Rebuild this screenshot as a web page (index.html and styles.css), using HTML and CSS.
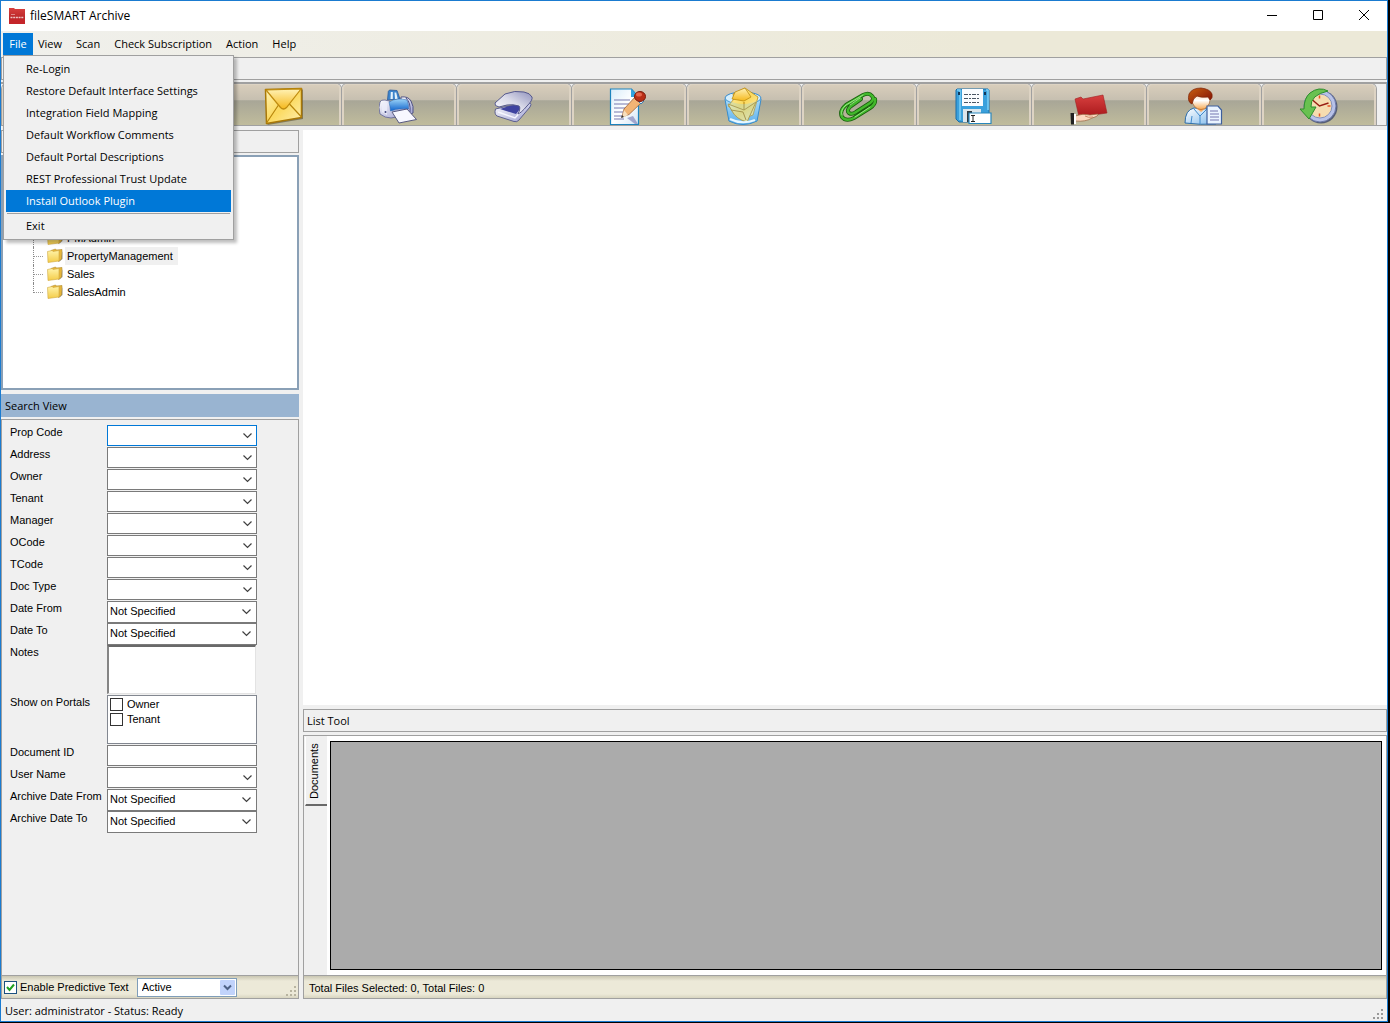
FILE: index.html
```html
<!DOCTYPE html>
<html lang="en">
<head>
<meta charset="utf-8">
<title>fileSMART Archive</title>
<link rel="stylesheet" href="styles.css">
</head>
<body>
<svg class="defs" aria-hidden="true">
  <defs>
    <linearGradient id="gold" x1="0" y1="0" x2="1" y2="1"><stop offset="0" stop-color="#fff3b8"/><stop offset=".5" stop-color="#fbd95e"/><stop offset="1" stop-color="#fff0b0"/></linearGradient>
    <linearGradient id="flap" x1="0" y1="0" x2="0" y2="1"><stop offset="0" stop-color="#fff2b5"/><stop offset="1" stop-color="#f5b81c"/></linearGradient>
    <linearGradient id="leaf" x1="0" y1="0" x2="0" y2="1"><stop offset="0" stop-color="#fff3a8"/><stop offset="1" stop-color="#f4cc48"/></linearGradient>
    <linearGradient id="lilac" x1="0" y1="0" x2="1" y2="1"><stop offset="0" stop-color="#ffffff"/><stop offset="1" stop-color="#9a9cd0"/></linearGradient>
    <linearGradient id="lid" x1="0" y1="1" x2="1" y2="0"><stop offset="0" stop-color="#ffffff"/><stop offset=".5" stop-color="#dcdcea"/><stop offset="1" stop-color="#8f91bc"/></linearGradient>
    <linearGradient id="blue" x1="0" y1="0" x2="0" y2="1"><stop offset="0" stop-color="#9cd4f8"/><stop offset="1" stop-color="#1064cc"/></linearGradient>
    <linearGradient id="page" x1="0" y1="0" x2="1" y2="1"><stop offset="0" stop-color="#d8ecfa"/><stop offset=".5" stop-color="#ffffff"/><stop offset="1" stop-color="#d4e6f6"/></linearGradient>
    <linearGradient id="shirt" x1="0" y1="0" x2="1" y2="1"><stop offset="0" stop-color="#ffffff"/><stop offset="1" stop-color="#7db8ea"/></linearGradient>
    <linearGradient id="glass" x1="0" y1="0" x2="0" y2="1"><stop offset="0" stop-color="#b9e0fb"/><stop offset="1" stop-color="#4fa5e6"/></linearGradient>
    <linearGradient id="red" x1="0" y1="0" x2="0" y2="1"><stop offset="0" stop-color="#d8403f"/><stop offset="1" stop-color="#a8181b"/></linearGradient>
    <linearGradient id="skin" x1="0" y1="0" x2="0" y2="1"><stop offset="0" stop-color="#f6b070"/><stop offset=".55" stop-color="#ffffff"/><stop offset="1" stop-color="#f8a850"/></linearGradient>
    <linearGradient id="hair" x1="0" y1="0" x2="1" y2="1"><stop offset="0" stop-color="#c86010"/><stop offset="1" stop-color="#7c0a04"/></linearGradient>
    <symbol id="folder" viewBox="0 0 16 16">
      <path d="M2 15.500 12 14l3.500-3V3l-3.500 11Z" fill="#77715f" opacity=".7"/>
      <path d="M4 2.500 8.500 1l1 1L15 1.500 14.500 11l-3 2.500Z" fill="#e5b53a" stroke="#b08a2a" stroke-width=".6"/>
      <path d="M.5 3.500 5 2.500l1 1 6-1V13L1 14.500Z" fill="url(#leaf)" stroke="#d0a840" stroke-width=".6"/>
    </symbol>
  </defs>
</svg>
<div class="window">
  <header class="titlebar">
    <svg class="app-icon" viewBox="0 0 16 16" aria-hidden="true"><path d="M0 0h5l1 1h10v15H0Z" fill="url(#red)"/><path d="M0 11h16v5H0Z" fill="#c4252a"/><path d="M1.500 9.500h13" stroke="#f0c4c4" stroke-width="1.500" stroke-dasharray="2 .7"/><path d="M2 6.500h4" stroke="#e08a8a"/></svg>
    <h1 class="title">fileSMART Archive</h1>
    <button class="winbtn" aria-label="Minimize"><svg viewBox="0 0 12 12"><path d="M1 5.500h10" /></svg></button>
    <button class="winbtn" aria-label="Maximize"><svg viewBox="0 0 12 12"><path d="M1.500.5h9v9h-9Z"/></svg></button>
    <button class="winbtn" aria-label="Close"><svg viewBox="0 0 12 12"><path d="m1 0 10 10M11 0 1 10"/></svg></button>
  </header>
  <nav class="menubar">
    <div class="menu-holder">
      <button class="menu-item open">File</button>
      <div class="dropdown">
        <button class="command">Re-Login</button>
        <button class="command">Restore Default Interface Settings</button>
        <button class="command">Integration Field Mapping</button>
        <button class="command">Default Workflow Comments</button>
        <button class="command">Default Portal Descriptions</button>
        <button class="command">REST Professional Trust Update</button>
        <button class="command selected">Install Outlook Plugin</button>
        <hr class="divider">
        <button class="command">Exit</button>
      </div>
    </div>
    <button class="menu-item">View</button>
    <button class="menu-item">Scan</button>
    <button class="menu-item">Check Subscription</button>
    <button class="menu-item">Action</button>
    <button class="menu-item">Help</button>
  </nav>
  <div class="caption-strip"></div>
  <div class="toolbar">
    <button class="tool" aria-label="Open"></button>
    <button class="tool" aria-label="New"></button>
    <button class="tool" aria-label="Email"><svg viewBox="0 0 40 40"><path d="M3 5.500 39 4.500V34L3.500 40Z" fill="#5c5030" opacity=".6"/><path d="M1.500 4.500 37.500 3.500V32.500L2.500 38.500Z" fill="url(#gold)" stroke="#a87808" stroke-width="1.500" stroke-linejoin="round"/><path d="M2.500 38 14.500 20M37.500 32 25 18.500" fill="none" stroke="#b8860b" stroke-width="1.200"/><path d="M2 5 37 4 22.500 22.500Q19.500 25.500 16.500 22.500Z" fill="url(#flap)" stroke="#c08c10" stroke-width="1.200"/></svg></button>
    <button class="tool" aria-label="Print"><svg viewBox="0 0 40 40"><path d="m8.500 15 .8-8.500 1.200-1.500 7.500.5L21 14Z" fill="#3c84cc" stroke="#2c5c9c" stroke-width=".8"/><path d="m11.500 14 .3-7h2v7M16 14l-.5-6.500h1.700l1.500 6.500" fill="#e4f2fc"/><path d="M22 12q7-1 10 4 3 5 2 12l-6 2-6-8Z" fill="url(#lilac)" stroke="#4f5282"/><path d="M27 13q5 5 4 14" fill="none" stroke="#4c4f86"/><path d="M1 17q1-2.500 5-2l4 1 18 6v8l-16 3q-6 0-11-4-2-7 0-12Z" fill="url(#lilac)" stroke="#5c5f90" stroke-width=".8"/><path d="M10 17q8-5 18-2 2 4 1.500 9-10-1-18 2Q11 21 10 17Z" fill="url(#blue)" stroke="#2c62a8" stroke-width=".5"/><path d="m13 27 15-3 9.500 10.500L20 38Z" fill="#f7f7ff" stroke="#585a80"/><path d="M3 18q3-1 5 0v12l-5-3Z" fill="#eceefa" opacity=".8"/><circle cx="6.500" cy="27" r="1" fill="#3e447c"/></svg></button>
    <button class="tool" aria-label="Scan"><svg viewBox="0 0 40 40"><path d="M1.500 24 10 22 36 18q2 1 0 4L25 35q-2 2.500-5 1.500L3 31q-3-2-1.500-7Z" fill="url(#lilac)" stroke="#5d6090"/><path d="m6 24 9-3 15-2-8 10Z" fill="#3f43a0"/><path d="m4 27 17 6 12-13" fill="none" stroke="#f6f6ff" stroke-width="1.500"/><path d="M1 18 11 9q10-4 19-2 6 1 8 5 1 3-5 9-6 7-9 8 3-6 1-8-6-2-12-1l-8 2Q0 21 1 18Z" fill="url(#lid)" stroke="#55588c"/></svg></button>
    <button class="tool" aria-label="Edit notes"><svg viewBox="0 0 40 40"><path d="M1.500 4h21l7 8v27.500h-28Z" fill="url(#page)" stroke="#1c83bd" stroke-width="1.200"/><path d="M22 4v8h8Z" fill="#32a4e0"/><path d="M5 15h16M5 19h15M5 23h12M5 27h9M5 31h8M5 34h10" stroke="#7779af"/><path d="m18 33 6-2 5 8H26Z" fill="#8586bb" opacity=".7"/><path d="m13 32 2-8L27 11l6 6-13 12.500Z" fill="#f2b475" stroke="#9b6138" stroke-width=".8"/><path d="m15 25 4 5-6 3Z" fill="#f7dfbd"/><path d="m13 30 2 2-3 1Z" fill="#333"/><path d="m25 12 3-3 7 7-3 3Z" fill="#d5e9f8" stroke="#4080ac"/><ellipse cx="31" cy="11.500" rx="5.500" ry="5" fill="#b92f16" stroke="#7b1a0b"/><ellipse cx="30" cy="9.500" rx="3" ry="2" fill="#e4664d"/></svg></button>
    <button class="tool" aria-label="Mail basket"><svg viewBox="0 0 40 40"><path d="m1 14 4 22q14 7 28 0l4-22Z" fill="url(#glass)" stroke="#2c83c8"/><ellipse cx="19" cy="13" rx="18" ry="6" fill="#d5effd" stroke="#378aca"/><path d="m9 9 12-6 13 9-5 18-8 3L4 21l6-7Z" fill="url(#gold)" stroke="#b78b18" stroke-width=".8"/><path d="m8 14 3-7 10-4 6 9-7 4Z" fill="url(#flap)" stroke="#bd8c10" stroke-width=".8"/><path d="m4 19 16 6 12-8-9 20Q12 34 8 26Z" fill="url(#gold)" stroke="#bc8b19"/><path d="m7 25 12 2 3 8M20 17v8" fill="none" stroke="#b4810f"/><path d="M1 14q18 10 36 0l-4 22q-14 7-28 0Z" fill="#86cff8" opacity=".28"/><path d="M6 34q12 6 25 1" fill="none" stroke="#e7f7ff" stroke-width="2"/></svg></button>
    <button class="tool" aria-label="Attach"><svg viewBox="0 0 40 40" fill="none" stroke-linecap="round"><path d="m22 14-10 7q-5 4-2 7 3 2 7-1l14-9q5-4 2-7-3-4-9-1L7 20q-7 6-4 12 4 5 12 1l16-10q6-4 5-9" stroke="#175e0c" stroke-width="4"/><path d="m22 14-10 7q-5 4-2 7 3 2 7-1l14-9q5-4 2-7-3-4-9-1L7 20q-7 6-4 12 4 5 12 1l16-10q6-4 5-9" stroke="#41b82b" stroke-width="2.500"/><path d="m21 13-10 7M24 10 7 20q-6 5-4 10M31 22 16 32" stroke="#b3ee9e" stroke-width=".8"/></svg></button>
    <button class="tool" aria-label="Save as"><svg viewBox="0 0 40 40"><path d="M3 4h31l1 1v32H5l-3-3V5Z" fill="#3aa0dc" stroke="#176da8"/><path d="M3 5h3v30M32 5h2v20" fill="none" stroke="#7ed0f6" stroke-width="1.500"/><path d="M8 4h21v17H8Z" fill="#fafcff"/><path d="M10 9.500h16M10 13.500h16M10 17.500h16" stroke="#4a5665" stroke-width="1.200" stroke-dasharray="4 1 2 1"/><path d="M9 24h18v13H9Z" fill="#dce6ec"/><path d="M13 26h5v11h-5Z" fill="#303940"/><path d="M4 7h2v3H4zM30 7h2v3h-2Z" fill="#12395c"/><path d="M15 28h22v10.500H15Z" fill="#fff" stroke="#2887bd" stroke-width="1.200"/><path d="M17 30.500h4m-4 6h4m-2-6v6" stroke="#222"/></svg></button>
    <button class="tool" aria-label="Share folder"><svg viewBox="0 0 40 40"><path d="m6 14 6-2 2 2 20-4 4 18-28 4Z" fill="url(#red)" stroke="#a02022" stroke-width=".6"/><path d="M6 31q8-3 15-1l8-1q1 2-6 4-6 4-17 3Z" fill="#fbd8bf" stroke="#96613d" stroke-width=".7"/><path d="M16 31q3 2 8 1" fill="none" stroke="#c98a66"/><path d="M4 29h3v10H4Z" fill="#fff"/><path d="M1.500 28H5v11.500H2Z" fill="#222"/></svg></button>
    <button class="tool" aria-label="User record"><svg viewBox="0 0 40 40"><path d="M1 38q0-13 9-15l15 1q7 5 7 15-16 1-31-1Z" fill="url(#shirt)" stroke="#2c6ca8"/><path d="m10 24 6 7 8-8M16 30v9M7 38l1-7" stroke="#3f8acc" fill="none"/><path d="m11 22 6 5 6-5-1-3H12Z" fill="#f6ad62"/><ellipse cx="17" cy="14.500" rx="9" ry="10" fill="url(#skin)" stroke="#a65721" stroke-width=".6"/><path d="M8 19Q3 17 5 9q3-6 12-6 9 1 11 6 1 4-2 6l-2-3q-7 1-11-1-4 2-5 8Z" fill="url(#hair)" stroke="#7b2005" stroke-width=".7"/><path d="M23 21h11l3.500 4v14H23Z" fill="#eaf4ff" stroke="#3d5f9d" stroke-width="1.200"/><path d="M26 26h8M26 29h9M26 32h9M26 35h9" stroke="#7477b0"/></svg></button>
    <button class="tool" aria-label="History"><svg viewBox="0 0 40 40"><circle cx="22" cy="22" r="16.500" fill="#555e76"/><circle cx="21" cy="21" r="16" fill="#b8c2e8" stroke="#6c78a8"/><circle cx="21" cy="21" r="12" fill="#f6dcb0" stroke="#8391bd"/><path d="M20.500 10.500v3M20.500 28.500v3M28.500 21h3" stroke="#e65425" stroke-width="1.500"/><path d="m13.500 15 7 6 9-3" fill="none" stroke="#981c12" stroke-width="1.500"/><path d="M29 6Q20 1 11 8q-6 5-6 16H1l9 10 7-12h-5q-1-12 17-16Z" fill="#69c150" stroke="#2c8e2a"/></svg></button>
  </div>
  <main class="workspace">
    <aside class="side">
      <div class="pane-head"></div>
      <ul class="tree">
        <li class="node"><svg class="folder" aria-hidden="true"><use href="#folder"/></svg><span class="node-name">PMAdmin</span></li>
        <li class="node"><svg class="folder" aria-hidden="true"><use href="#folder"/></svg><span class="node-name current">PropertyManagement</span></li>
        <li class="node"><svg class="folder" aria-hidden="true"><use href="#folder"/></svg><span class="node-name">Sales</span></li>
        <li class="node"><svg class="folder" aria-hidden="true"><use href="#folder"/></svg><span class="node-name">SalesAdmin</span></li>
      </ul>
      <h2 class="search-head">Search View</h2>
      <form class="search">
        <div class="field"><label for="prop">Prop Code</label><select id="prop" class="combo focused"><option></option></select></div>
        <div class="field"><label for="address">Address</label><select id="address" class="combo"><option></option></select></div>
        <div class="field"><label for="owner">Owner</label><select id="owner" class="combo"><option></option></select></div>
        <div class="field"><label for="tenant">Tenant</label><select id="tenant" class="combo"><option></option></select></div>
        <div class="field"><label for="manager">Manager</label><select id="manager" class="combo"><option></option></select></div>
        <div class="field"><label for="ocode">OCode</label><select id="ocode" class="combo"><option></option></select></div>
        <div class="field"><label for="tcode">TCode</label><select id="tcode" class="combo"><option></option></select></div>
        <div class="field"><label for="doctype">Doc Type</label><select id="doctype" class="combo"><option></option></select></div>
        <div class="field"><label for="from">Date From</label><select id="from" class="combo date"><option>Not Specified</option></select></div>
        <div class="field"><label for="to">Date To</label><select id="to" class="combo date"><option>Not Specified</option></select></div>
        <div class="field tall"><label for="notes">Notes</label><textarea id="notes" class="notes"></textarea></div>
        <div class="field tall"><span>Show on Portals</span>
          <div class="checklist">
            <label class="check"><input type="checkbox" class="box"><span class="check-text">Owner</span></label>
            <label class="check"><input type="checkbox" class="box"><span class="check-text">Tenant</span></label>
          </div>
        </div>
        <div class="field"><label for="docid">Document ID</label><input id="docid" type="text" class="textbox"></div>
        <div class="field"><label for="user">User Name</label><select id="user" class="combo"><option></option></select></div>
        <div class="field"><label for="afrom">Archive Date From</label><select id="afrom" class="combo date"><option>Not Specified</option></select></div>
        <div class="field"><label for="ato">Archive Date To</label><select id="ato" class="combo date"><option>Not Specified</option></select></div>
      </form>
      <div class="tan-bar">
        <label class="check predictive"><input type="checkbox" class="box ticked" checked>Enable Predictive Text</label>
        <select class="state" aria-label="State"><option>Active</option></select>
        <svg class="grip light" viewBox="0 0 12 12" aria-hidden="true"><path d="M8 0h2v2H8zM4 4h2v2H4zM8 4h2v2H8zM0 8h2v2H0zM4 8h2v2H4zM8 8h2v2H8z"/></svg>
      </div>
    </aside>
    <section class="content">
      <div class="viewer"></div>
      <h2 class="pane-head">List Tool</h2>
      <div class="documents">
        <div class="tabs"><button class="tab"><span class="tab-text">Documents</span></button></div>
        <div class="sheet"><div class="grid-area"></div></div>
      </div>
      <div class="tan-bar totals">Total Files Selected: 0, Total Files: 0</div>
    </section>
  </main>
  <footer class="statusbar">
    <span>User: administrator - Status: Ready</span>
    <svg class="grip" viewBox="0 0 12 12" aria-hidden="true"><path d="M8 0h2v2H8zM4 4h2v2H4zM8 4h2v2H8zM0 8h2v2H0zM4 8h2v2H4zM8 8h2v2H8z"/></svg>
  </footer>
</div>
</body>
</html>
```
FILE: styles.css
```css
:root {
  --ui: "Open Sans", "Noto Sans", sans-serif;
  --form: "Liberation Sans", Arial, sans-serif;
  --line: #a0a0a0;
  --face: #f0f0f0;
  --accent: #0078d7;
}
* { box-sizing: border-box; }
body {
  margin: 0;
  padding: 0 2px 1px 0;
  min-height: 100vh;
  display: flex;
  background: #000;
  color: #000;
  font: 11px/14px var(--form);
}
button, select, input, textarea { font: inherit; color: inherit; margin: 0; border-radius: 0; }
button { border: 0; padding: 0; background: none; }
h1, h2 { margin: 0; font-weight: 400; }
.defs { position: absolute; width: 0; height: 0; }

.window {
  flex: 1;
  min-width: 0;
  display: flex;
  flex-direction: column;
  background: var(--face);
  border: 1px solid #1a7bd0;
}

.titlebar { display: flex; align-items: center; height: 30px; padding-left: 8px; background: #fff; }
.app-icon { width: 16px; height: 16px; margin-right: 5px; }
.title { flex: 1; font: 12px/16px var(--ui); }
.winbtn { width: 46px; height: 30px; display: grid; place-items: center; }
.winbtn svg { width: 12px; height: 12px; fill: none; stroke: #000; }

.menubar {
  display: flex;
  align-items: center;
  height: 26px;
  padding-left: 2px;
  background: linear-gradient(to right, #f0f0ec, #ece9d8 70%);
  font: 11px/22px var(--ui);
}
.menu-holder { position: relative; }
.menu-item { height: 22px; padding: 0 9px 0 5px; }
.menu-item.open { width: 30px; padding: 0; background: var(--accent); color: #fff; }
.dropdown {
  position: absolute;
  z-index: 2;
  top: 22px;
  left: 0;
  width: 231px;
  padding: 2px;
  background: var(--face);
  border: 1px solid var(--line);
  box-shadow: 3px 3px 3px rgba(0, 0, 0, .25);
}
.command { display: block; width: 100%; height: 22px; padding-left: 20px; text-align: left; }
.command.selected { background: var(--accent); color: #fff; }
.divider { height: 1px; margin: 1px; border: 0; background: var(--line); }

.caption-strip { height: 23px; border: 1px solid var(--line); margin-bottom: 2px; }

.toolbar {
  display: grid;
  grid-template-columns: 110fr repeat(11, 115fr);
  height: 44px;
  padding: 0 9px 0 1px;
  border: solid var(--line);
  border-width: 2px 1px 1px 0;
}
.tool {
  display: grid;
  place-items: center;
  margin-right: 1px;
  border: 2px solid #ddd3c3;
  border-width: 1px 2px 0;
  border-radius: 5px 5px 0 0;
  background: linear-gradient(#d8cdbb, #c6bfb0 38%, #a8a697 39%, #c0bc9c);
  box-shadow: 0 0 0 1px var(--line);
}
.tool svg { width: 40px; height: 40px; }

.workspace { flex: 1; display: grid; grid-template-columns: 298px 1fr; gap: 4px; padding-top: 4px; }
.side, .content { display: flex; flex-direction: column; min-width: 0; }
.pane-head { height: 23px; padding-left: 3px; border: 1px solid var(--line); font: 11px/21px var(--ui); }
.tree {
  height: 235px;
  margin: 2px 0 4px;
  padding: 72px 0 0 30px;
  list-style: none;
  background: #fff;
  border: 2px solid #8aa0b6;
}
.node { display: flex; align-items: center; height: 18px; }
.node::before {
  content: "";
  width: 9px;
  height: 18px;
  margin-right: 4px;
  border-left: 1px dotted #888;
  background: linear-gradient(to right, #999 50%, transparent 50%) 0 9px / 2px 1px repeat-x;
}
.node:last-child::before { height: 10px; margin-bottom: 8px; }
.folder { width: 16px; height: 16px; margin-right: 2px; }
.node-name { padding: 0 5px 0 2px; line-height: 18px; }
.node-name.current { background: var(--face); }

.search-head { height: 23px; padding-left: 4px; background: #99b4d1; font: 11px/23px var(--ui); }
.search { flex: 1; margin-top: 2px; padding: 5px 8px; border: solid var(--line); border-width: 1px 1px 0; }
.field { display: grid; grid-template-columns: 97px 150px; height: 22px; }
.field.tall { height: 50px; }
.combo, .textbox { width: 150px; height: 21px; padding: 0 2px; background: #fff; border: 1px solid #7a7a7a; outline: 0; }
.combo {
  appearance: none;
  background: #fff url("data:image/svg+xml,%3Csvg xmlns='http://www.w3.org/2000/svg' width='9' height='6'%3E%3Cpath d='m.5.500 4 4 4-4' fill='none' stroke='%23404040' stroke-width='1.200'/%3E%3C/svg%3E") no-repeat right 4px center;
}
.combo.focused { border-color: var(--accent); }
.combo.date { height: 22px; padding-bottom: 2px; background-position: right 5px center; }
.notes { width: 149px; height: 49px; resize: none; border: 1px solid #e3e3e3; border-top: 2px solid #696969; border-left: 2px solid #858585; }
.checklist { height: 49px; padding: 1px 2px; background: #fff; border: 1px solid #828790; }
.check { display: flex; align-items: center; gap: 4px; height: 15px; }
.check-text { padding-bottom: 2px; }
.box { appearance: none; width: 13px; height: 13px; background: #fff; border: 1px solid #333; }
.box.ticked {
  border-color: #1c5180;
  background: #fff url("data:image/svg+xml,%3Csvg xmlns='http://www.w3.org/2000/svg' width='9' height='9'%3E%3Cpath d='m1 4 2.500 3L8 1.500' fill='none' stroke='%2321a121' stroke-width='2'/%3E%3C/svg%3E") no-repeat center;
}

.tan-bar {
  display: flex;
  align-items: center;
  height: 24px;
  padding: 0 0 0 2px;
  border: 1px solid var(--line);
  background: linear-gradient(#c9c6b2, #ece9d8 5px, #ece9d8 18px, #d8d5c0);
}
.predictive { gap: 3px; margin-right: 8px; white-space: nowrap; }
.state {
  appearance: none;
  width: 100px;
  height: 19px;
  padding: 0 4px;
  border: 1px solid #7f9db9;
  background:
    url("data:image/svg+xml,%3Csvg xmlns='http://www.w3.org/2000/svg' width='15' height='15'%3E%3Crect width='15' height='15' rx='1' fill='%23c1d3fb'/%3E%3Cpath d='m4 5.500 3.500 3.500L11 5.500' fill='none' stroke='%234d6185' stroke-width='2'/%3E%3C/svg%3E") no-repeat right 1px center,
    #fff;
}
.grip { width: 12px; height: 12px; margin-left: auto; fill: #999; }
.grip.light { align-self: flex-end; fill: #b8b4a0; }

.viewer { flex: 1; margin-bottom: 4px; background: #fff; }
.documents { display: flex; height: 240px; margin-top: 3px; border: solid var(--line); border-width: 1px 1px 0; }
.tabs { width: 23px; padding: 1px 0 0 1px; }
.tab { width: 22px; height: 69px; display: flex; justify-content: flex-start; padding: 2px 0 0 1px; border-bottom: 2px solid #696969; border-left: 1px solid #fff; }
.tab-text { writing-mode: vertical-rl; transform: rotate(180deg); }
.sheet { flex: 1; display: flex; padding: 5px 4px 5px 3px; background: #fff; }
.grid-area { flex: 1; background: #ababab; border: 1px solid #000; }
.totals { padding: 1px 0 0 5px; }

.statusbar { display: flex; align-items: center; height: 22px; padding: 2px 2px 0 4px; font: 11px/14px var(--ui); }
.statusbar .grip { align-self: flex-end; }
```
